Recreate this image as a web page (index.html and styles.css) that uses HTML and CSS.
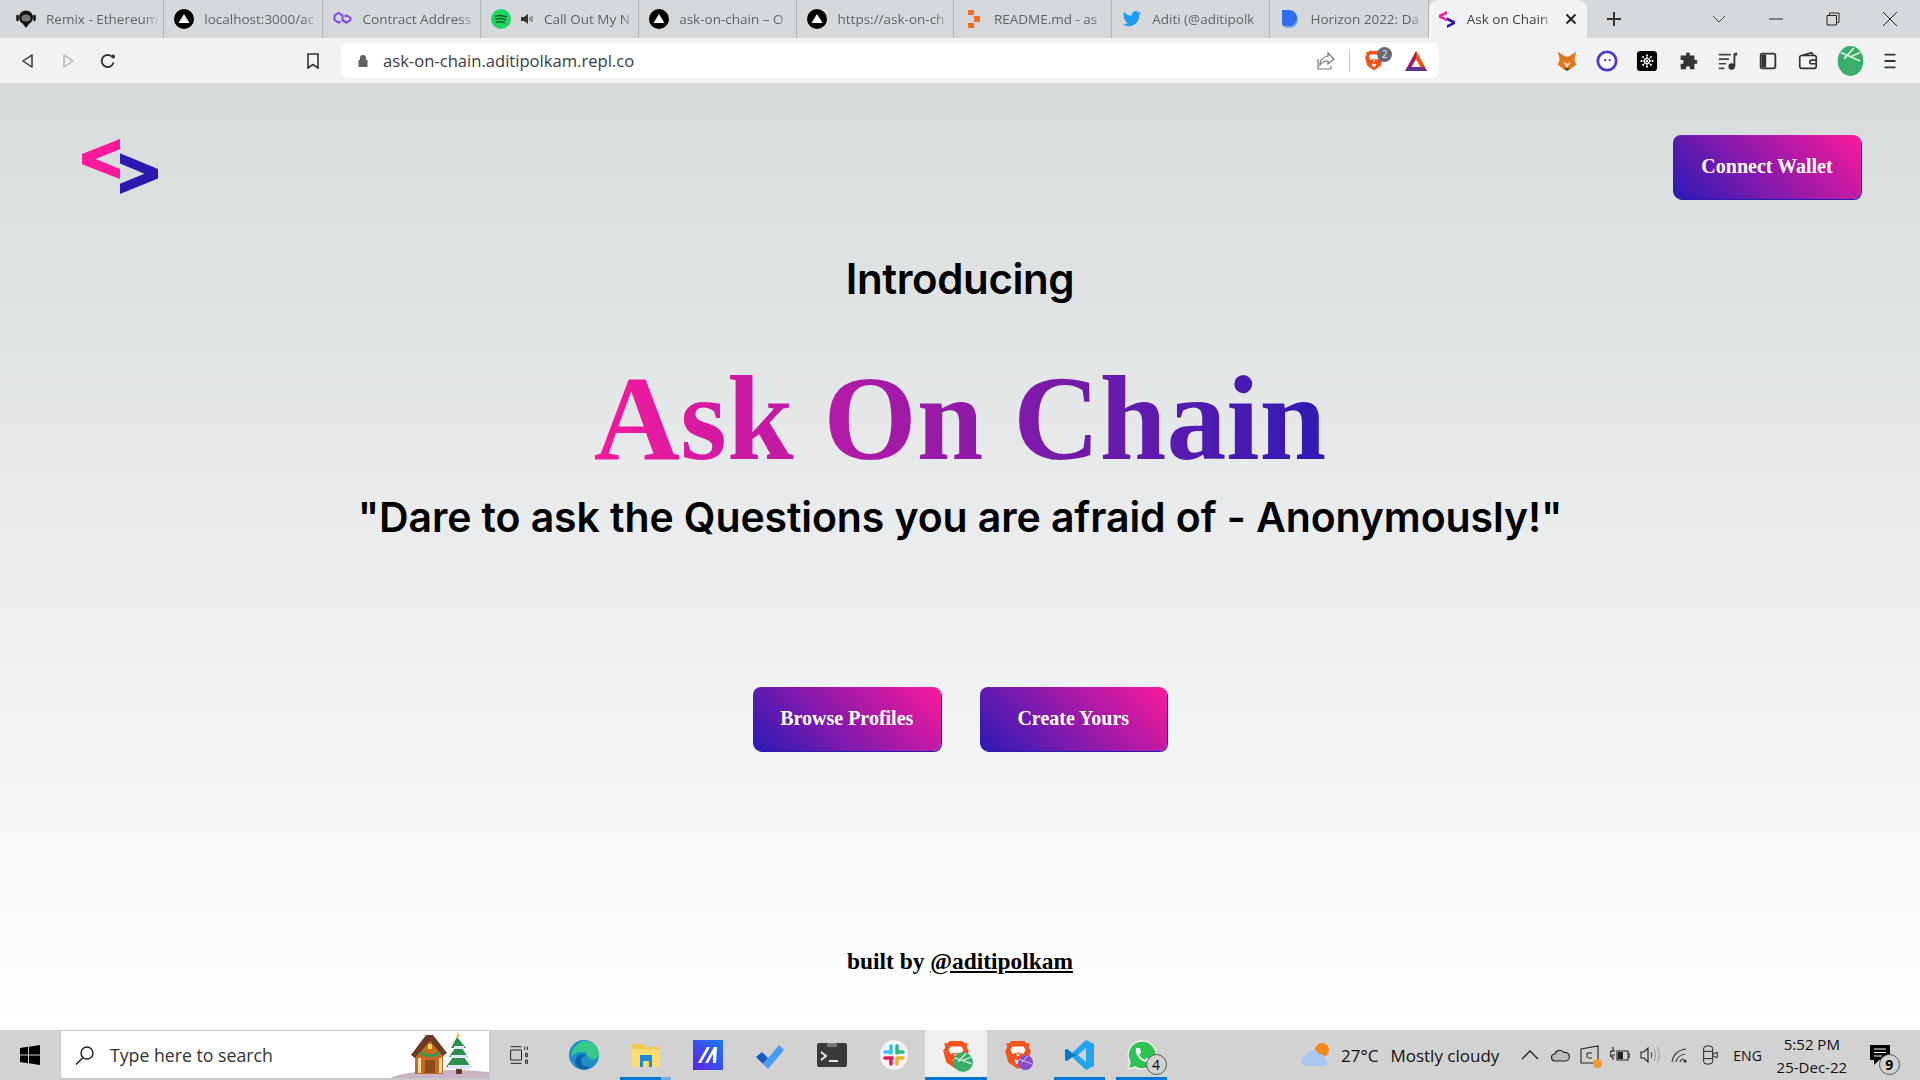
FILE: index.html
```html
<!DOCTYPE html>
<html lang="en">
<head>
<meta charset="utf-8">
<title>Ask on Chain</title>
<link rel="stylesheet" href="styles.css">
</head>
<body>
<svg class="defs" width="0" height="0" aria-hidden="true">
  <defs>
    <symbol id="vercel" viewBox="0 0 20 20"><circle cx="10" cy="10" r="10" fill="#000"/><path d="M10 5l5.500 9h-11z" fill="#fff"/></symbol>
    <symbol id="logo" viewBox="68 62 224 162"><path d="M180 62v30l-72 29 72 29v30L68 136v-30z" fill="#fb1a9c"/><path d="M180 104l112 46v28l-112 46v-30l72-30-72-30z" fill="#2a1ab0"/></symbol>
    <symbol id="brave" viewBox="0 0 24 28"><path d="M6 1h12l2 2 3 0-1 4 2 3-3 11-9 6-9-6L0 10l2-3-1-4 3 0z" fill="#f1541e"/><path d="M7 6h10l2 3-2 4-3-1-1 3h-2l-1-3-3 1-2-4z" fill="#fff"/><path d="M9 18l3 1 3-1-1 4h-4z" fill="#fff"/><path d="M10 12l2 2 2-2" fill="#f1541e"/></symbol>
    <symbol id="ball" viewBox="0 0 24 28"><ellipse cx="12" cy="14" rx="12" ry="14" fill="#3cae6c"/><path d="M3 6l18 8M15 2L6 12M12 10l9-4" stroke="#d8efe0" stroke-width="1.500" fill="none"/></symbol>
  </defs>
</svg>

<header class="tabstrip">
  <div class="tab">
    <svg class="fav" viewBox="0 0 20 20"><circle cx="10" cy="8.500" r="7" fill="#111"/><ellipse cx="10" cy="9" rx="4.500" ry="3.500" fill="#777"/><path d="M1.500 7v4M18.500 7v4" stroke="#111" stroke-width="2.500" stroke-linecap="round"/><path d="M7 15l3 4 3-4z" fill="#111"/></svg>
    <span class="tab-title">Remix - Ethereum</span>
  </div>
  <div class="tab">
    <svg class="fav"><use href="#vercel"/></svg>
    <span class="tab-title">localhost:3000/ac</span>
  </div>
  <div class="tab">
    <svg class="fav" viewBox="0 0 20 20"><path d="M1.500 6.500L5.500 4l4 2.500v4.500l4 2.500 4-2.500V9l-4-2.500-2 1.200M13.500 14l-4-2.500V7M1.500 6.500V11l4 2.500 2-1.200" fill="none" stroke="#8247e5" stroke-width="2"/></svg>
    <span class="tab-title">Contract Address</span>
  </div>
  <div class="tab">
    <svg class="fav" viewBox="0 0 20 20"><circle cx="10" cy="10" r="10" fill="#1ed760"/><path d="M4.500 7c4-1 8-.7 11 1M5 10c3.500-.8 7-.5 9.500 1M5.500 13c3-.6 5.500-.4 8 .8" fill="none" stroke="#155d2e" stroke-width="1.500" stroke-linecap="round"/></svg>
    <svg class="audio" viewBox="0 0 14 14"><path d="M1 5h3l4-3v10L4 9H1z" fill="#333"/><path d="M10 5v4M12 4v6" stroke="#555"/></svg>
    <span class="tab-title">Call Out My N</span>
  </div>
  <div class="tab">
    <svg class="fav"><use href="#vercel"/></svg>
    <span class="tab-title">ask-on-chain – O</span>
  </div>
  <div class="tab tab-tight">
    <svg class="fav"><use href="#vercel"/></svg>
    <span class="tab-title">https://ask-on-ch</span>
  </div>
  <div class="tab">
    <svg class="fav" viewBox="0 0 20 20"><path d="M4 1h6v5H4zM10 7h6v6h-6zM4 14h6v5H4z" fill="#f26d1d"/></svg>
    <span class="tab-title">README.md - as</span>
  </div>
  <div class="tab">
    <svg class="fav" viewBox="0 0 24 24"><path d="M23 5a9 9 0 0 1-2.600.7A4.500 4.500 0 0 0 22.400 3a9 9 0 0 1-2.900 1.100 4.500 4.500 0 0 0-7.700 4.100A12.800 12.800 0 0 1 2.500 3.500a4.500 4.500 0 0 0 1.400 6 4.500 4.500 0 0 1-2-.6c0 2.200 1.600 4 3.600 4.500a4.500 4.500 0 0 1-2 .1 4.500 4.500 0 0 0 4.200 3.100A9 9 0 0 1 1 18.500 12.800 12.800 0 0 0 20.700 7.100 9 9 0 0 0 23 5z" fill="#1d9bf0"/></svg>
    <span class="tab-title">Aditi (@aditipolk</span>
  </div>
  <div class="tab">
    <svg class="fav" viewBox="0 0 20 20"><path d="M3 3h7a8 8 0 0 1 8 8 8 8 0 0 1-8 8H6a3 3 0 0 1-3-3z" fill="#7ea6f7"/><path d="M2 1h7a8 8 0 0 1 8 8 8 8 0 0 1-8 8H5a3 3 0 0 1-3-3z" fill="#2f6bea"/></svg>
    <span class="tab-title">Horizon 2022: Da</span>
  </div>
  <div class="tab tab-active">
    <svg class="fav-logo" viewBox="0 0 40 46" preserveAspectRatio="none"><path d="M20 0v8L8 14l12 7v7L0 18v-8z" fill="#fb1a9c"/><path d="M20 17l20 11v7L20 46v-8l12-6-12-7z" fill="#2a1ab0"/></svg>
    <span class="tab-title">Ask on Chain</span>
    <svg class="tab-close" viewBox="0 0 12 12"><path d="M1.500 1.500l9 9M10.500 1.500l-9 9" stroke="#222" stroke-width="1.800"/></svg>
  </div>
  <svg class="new-tab" viewBox="0 0 16 16"><path d="M8 1v14M1 8h14" stroke="#333" stroke-width="2"/></svg>
  <div class="window-ctrls">
    <svg class="ctrl" viewBox="0 0 14 14"><path d="M1 4l6 6 6-6" fill="none" stroke="#444"/></svg>
    <svg class="ctrl" viewBox="0 0 14 14"><path d="M0 7h14" stroke="#222"/></svg>
    <svg class="ctrl" viewBox="0 0 14 14"><path d="M1 3.500h9.500V13H1zM3.500 3.500V1H13v9.500h-2.500" fill="none" stroke="#222"/></svg>
    <svg class="ctrl" viewBox="0 0 14 14"><path d="M0 0l14 14M14 0L0 14" stroke="#222"/></svg>
  </div>
</header>

<nav class="toolbar">
  <svg class="tool tool-back" viewBox="0 0 16 16"><path d="M12 2v12L3 8z" fill="none" stroke="#333" stroke-width="1.500" stroke-linejoin="round"/></svg>
  <svg class="tool tool-fwd" viewBox="0 0 16 16"><path d="M4 2v12l9-6z" fill="none" stroke="#b5b5b5" stroke-width="1.500" stroke-linejoin="round"/></svg>
  <svg class="tool tool-reload" viewBox="0 0 16 16"><path d="M13.500 9.500A6 6 0 1 1 11 3" fill="none" stroke="#333" stroke-width="1.800"/><circle cx="13" cy="3.500" r="2" fill="#333"/></svg>
  <svg class="tool tool-mark" viewBox="0 0 16 16"><path d="M3 1h10v14l-5-3.500L3 15z" fill="none" stroke="#333" stroke-width="1.600"/></svg>
  <div class="omnibox">
    <svg class="lock" viewBox="0 0 12 14"><path d="M3 6V4a3 3 0 0 1 6 0v2h1.500v7h-9V6z" fill="#5f6368"/></svg>
    <span class="url">ask-on-chain.aditipolkam.repl.co</span>
    <svg class="share" viewBox="0 0 20 20"><path d="M12 2l6 6-6 5v-3c-4 0-6 1-8 4 0-5 3-8 8-9zM2 8v10h13v-3" fill="none" stroke="#777" stroke-width="1.200"/></svg>
    <i class="omni-sep"></i>
    <span class="shield">
      <svg class="shield-icon"><use href="#brave"/></svg>
      <b class="shield-badge">2</b>
    </span>
    <svg class="bat" viewBox="0 0 24 22"><path d="M12 1l11 20H1z" fill="#9e1f63"/><path d="M12 1l11 20h-6L12 11z" fill="#ff5000"/><path d="M1 21h22l-3-4H4z" fill="#662d91"/><path d="M12 9l4.500 8h-9z" fill="#f2f2f2"/></svg>
  </div>
  <div class="extensions">
    <svg class="ext" viewBox="0 0 24 24"><path d="M2 2l8 5h4l8-5-2 8 2 6-5 4-3 2h-4l-3-2-5-4 2-6z" fill="#e2761b"/><path d="M8 13l4 7 4-7-4 2z" fill="#f6e3cf"/><path d="M9 20h6l-3 3z" fill="#333"/></svg>
    <svg class="ext" viewBox="0 0 24 24"><circle cx="12" cy="12" r="10" fill="#fff" stroke="#4a3bd0" stroke-width="3"/><circle cx="10" cy="11" r="1.300" fill="#4a3bd0"/><circle cx="15" cy="11" r="1.300" fill="#4a3bd0"/></svg>
    <svg class="ext" viewBox="0 0 24 24"><rect x="1" y="1" width="22" height="22" rx="4" fill="#000"/><path d="M12 5v14M5 12h14M7 7l10 10M17 7L7 17" stroke="#fff" stroke-width="2" stroke-dasharray="2 1"/></svg>
    <svg class="ext" viewBox="0 0 24 24"><path d="M10 3h4v3h5v5h3v4h-3v6h-5v-3h-4v3H4v-6h3v-4H4V6h6z" fill="#333"/></svg>
    <svg class="ext" viewBox="0 0 24 24"><path d="M2 5h13M2 10h11M2 15h8M2 20h6" stroke="#444" stroke-width="1.800"/><path d="M19 4v14" stroke="#333" stroke-width="2"/><path d="M19 3h3v3h-3z" fill="#333"/><circle cx="16" cy="18" r="3.500" fill="#333"/></svg>
    <svg class="ext" viewBox="0 0 24 24"><rect x="4" y="4" width="16" height="16" rx="2" fill="none" stroke="#333" stroke-width="2"/><path d="M5 5h5v14H5z" fill="#333"/></svg>
    <svg class="ext" viewBox="0 0 24 24"><path d="M5 6l11-3 2 3M3 8a2 2 0 0 1 2-2h14a2 2 0 0 1 2 2v10a2 2 0 0 1-2 2H5a2 2 0 0 1-2-2zM21 11h-5a2 2 0 0 0 0 4h5" fill="none" stroke="#333" stroke-width="1.800"/></svg>
    <svg class="avatar"><use href="#ball"/></svg>
    <svg class="ext" viewBox="0 0 24 24"><path d="M6 5h12M6 12h12M6 19h12" stroke="#333" stroke-width="2"/></svg>
  </div>
</nav>

<main class="page">
  <div class="site-nav">
    <svg class="site-logo"><use href="#logo"/></svg>
    <a class="btn btn-wallet">Connect Wallet</a>
  </div>
  <section class="hero">
    <h2 class="intro">Introducing</h2>
    <h1 class="title">Ask On Chain</h1>
    <p class="tagline">"Dare to ask the Questions you are afraid of - Anonymously!"</p>
    <div class="actions">
      <a class="btn btn-cta">Browse Profiles</a>
      <a class="btn btn-cta">Create Yours</a>
    </div>
    <footer class="credit">built by <u>@aditipolkam</u></footer>
  </section>
</main>

<footer class="taskbar">
  <div class="start">
    <svg class="win" viewBox="0 0 20 20"><path d="M0 3l8-1.200V9.500H0zM9 1.700L20 0v9.500H9zM0 10.500h8v7.700L0 17zM9 10.500h11V20L9 18.300z" fill="#000"/></svg>
  </div>
  <div class="search">
    <svg class="loupe" viewBox="0 0 20 20"><circle cx="12" cy="8" r="6" fill="none" stroke="#222" stroke-width="1.400"/><path d="M8 12.500L1 19.500" stroke="#222" stroke-width="1.500"/></svg>
    <span class="search-text">Type here to search</span>
    <span class="xmas">
      <svg viewBox="0 0 97 50" width="97" height="50"><path d="M0 49c20-7 60-9 97-5v6H0z" fill="#c9b3c4"/>
        <g transform="translate(0 2)"><path d="M23 22L37 10l14 12v22H23z" fill="#c46a21"/><path d="M19 25L34 5h7l14 18-4 3-13-15-15 17z" fill="#6b3a26"/><path d="M28 22c6 5 14 5 20 0" fill="none" stroke="#2a9a55" stroke-width="2.500"/><path d="M33 30h10v13H33z" fill="#8f4a18"/><path d="M26 28h3v15h-3zM47 28h3v15h-3z" fill="#f0d8b0"/><path d="M36 14h4v5h-4z" fill="#f4d35e"/></g>
        <g transform="translate(-6 4)"><path d="M72 0l2 5h-4z" fill="#f4c430"/><path d="M71 5l9 11h-4l6 9h-4l7 10H60l7-10h-4l6-9h-4z" fill="#2b8f4e"/><path d="M62 33h22v4H62zM65 23h16v3H65zM68 14h10v3H68z" fill="#dfe6f5"/><path d="M70 37h6v5h-6z" fill="#6b3a26"/></g>
      </svg>
    </span>
  </div>
  <div class="task task-view">
    <svg class="ticon ticon-sm" viewBox="0 0 24 24"><path d="M2 2h13M2 22h13M2 6h13v12H2zM19 2v4M22 2v4M20 10h2v4h-2zM20 18h2v4h-2z" fill="none" stroke="#222" stroke-width="1.200"/></svg>
  </div>
  <div class="task">
    <svg class="ticon" viewBox="0 0 30 30"><circle cx="15" cy="15" r="15" fill="#1e8fc8"/><path d="M2 18C2 8 10 1 16 1c7 0 13 5 14 13 0 4-4 6-8 5-5-1-2-6-7-7-7-1-13 3-13 6z" fill="#37c98b"/><path d="M12 29c-5-2-7-7-5-11 2-4 8-5 10-2-3 0-6 2-5 6 1 4 5 5 9 5-2 2-6 3-9 2z" fill="#0f5fa8"/></svg>
  </div>
  <div class="task task-running task-files">
    <svg class="ticon" viewBox="0 0 30 30"><path d="M1 4h11l3 3h14v20H1z" fill="#f2c94c"/><path d="M1 9h28v18H1z" fill="#fbdc72"/><path d="M9 15h12v12h-3v-6h-6v6H9z" fill="#1e88d6"/></svg>
  </div>
  <div class="task">
    <svg class="ticon" viewBox="0 0 30 30"><defs><linearGradient id="m" x1="0" y1="1" x2="1" y2="0"><stop offset="0" stop-color="#5a22e0"/><stop offset="1" stop-color="#1a7bf2"/></linearGradient></defs><path d="M0 0h30v30H0z" fill="url(#m)"/><path d="M5 23L14 7h3L8 23zM12 23l9-16h3l-1 16h-3v-9l-5 9z" fill="#fff"/></svg>
  </div>
  <div class="task">
    <svg class="ticon" viewBox="0 0 30 30"><path d="M1 17l6-5 6 6-5 6z" fill="#185abd"/><path d="M8 24L24 5l5 5-16 19z" fill="#4a9cf0"/></svg>
  </div>
  <div class="task">
    <svg class="ticon" viewBox="0 0 30 30"><rect y="3" width="30" height="24" rx="2" fill="#3a3a3a"/><path d="M10 3h10v4H10z" fill="#777"/><path d="M4 12l5 4-5 4" fill="none" stroke="#e8e8e8" stroke-width="2"/><path d="M12 21h9" stroke="#e8e8e8" stroke-width="2"/></svg>
  </div>
  <div class="task">
    <svg class="ticon" viewBox="0 0 30 30"><ellipse cx="15" cy="15" rx="14" ry="15" fill="#f4f4f4"/><path d="M12 6v7M6 12h6" stroke="#36c5f0" stroke-width="3.500" stroke-linecap="round"/><path d="M18 6v7M24 12h-6" stroke="#2eb67d" stroke-width="3.500" stroke-linecap="round"/><path d="M6 18h7M12 18v6" stroke="#e01e5a" stroke-width="3.500" stroke-linecap="round"/><path d="M18 18v6M18 18h6" stroke="#ecb22e" stroke-width="3.500" stroke-linecap="round"/></svg>
  </div>
  <div class="task task-current">
    <span class="stack">
      <svg class="ticon"><use href="#brave"/></svg>
      <svg class="overlay" viewBox="0 0 24 24"><circle cx="12" cy="12" r="12" fill="#3cae6c"/><path d="M2 7l20 7M16 1L6 12M12 10l10-4" stroke="#d8efe0" stroke-width="1.500" fill="none"/></svg>
    </span>
  </div>
  <div class="task">
    <span class="stack">
      <svg class="ticon"><use href="#brave"/></svg>
      <svg class="overlay overlay-purple" viewBox="0 0 24 24"><circle cx="12" cy="12" r="12" fill="#8a4bc8"/><path d="M2 7l20 7M16 1L6 12" stroke="#e6c8f0" stroke-width="1.500"/></svg>
    </span>
  </div>
  <div class="task task-running">
    <svg class="ticon" viewBox="0 0 30 30"><path d="M21 0l8 4v22l-8 4L7 17l-5 4-2-1V10l2-1 5 4zM21 8l-8 7 8 7z" fill="#23a4ec"/><path d="M7 13l5 2-5 2-5 4-2-1V10l2-1z" fill="#0a78c2"/></svg>
  </div>
  <div class="task task-running">
    <span class="stack">
      <svg class="ticon" viewBox="0 0 30 30"><path d="M15 1a14 14 0 0 0-12 21L1 29l7-2A14 14 0 1 0 15 1z" fill="#2fc254" stroke="#eee" stroke-width="1.500"/><path d="M10 8l3 0 1 5-2 1c1 3 3 5 6 6l1-2 4 1v3c-6 2-16-6-14-14z" fill="#fff"/></svg>
      <b class="count">4</b>
    </span>
  </div>
  <div class="weather">
    <svg class="weather-icon" viewBox="0 0 30 30"><circle cx="21" cy="10" r="7" fill="#f08a1d"/><path d="M6 26a5 5 0 0 1-1-10 7 7 0 0 1 13-2 5 5 0 0 1 6 5 4 4 0 0 1 0 7z" fill="#a8c8ef"/></svg>
    <span>27°C</span>
    <span>Mostly cloudy</span>
  </div>
  <div class="tray">
    <svg class="tray-icon" viewBox="0 0 20 18"><path d="M2 13l8-8 8 8" fill="none" stroke="#222" stroke-width="1.300"/></svg>
    <svg class="tray-icon" viewBox="0 0 20 18"><path d="M5 15a3.500 3.500 0 0 1 0-7 5 5 0 0 1 9-1.500A4 4 0 0 1 16 15z" fill="#bbb" stroke="#222" stroke-width="1.200"/></svg>
    <span class="tray-box">
      <svg class="tray-icon" viewBox="0 0 20 20"><path d="M1 4l17-3v17H1z" fill="none" stroke="#222" stroke-width="1.100"/><path d="M12 8H7v5M8 13h4" fill="none" stroke="#222"/></svg>
      <i class="tray-dot"></i>
    </span>
    <svg class="tray-icon" viewBox="0 0 20 20"><path d="M1 6h4M1 10h4M3 2v4a1 1 0 0 0 0 6v3M7 6h11v9H7zM18 9h2v3h-2z" fill="none" stroke="#222" stroke-width="1.100"/><path d="M8 7h5v7H8z" fill="#222"/></svg>
    <svg class="tray-icon" viewBox="0 0 20 20"><path d="M1 7h3l4-4v14l-4-4H1z" fill="none" stroke="#222" stroke-width="1.100"/><path d="M11 7c1 2 1 4 0 6" fill="none" stroke="#333"/><path d="M14 4c2 4 2 8 0 12M17 2c3 5 3 11 0 16" fill="none" stroke="#999"/></svg>
    <svg class="tray-icon" viewBox="0 0 20 20"><path d="M2 17C3 10 8 5 16 4M6 17c1-5 4-7 9-8M10 17c.5-2 2-3 4-3" fill="none" stroke="#444" stroke-width="1.200"/><circle cx="15" cy="16" r="1.500" fill="#222"/></svg>
    <svg class="tray-icon" viewBox="0 0 20 22"><path d="M3 7V4q0-3 4-3h2q4 0 4 3v3M3 15v3q0 3 4 3h2q4 0 4-3v-3M3 7h10v8H3zM13 10l5-2v6l-5-2" fill="none" stroke="#222" stroke-width="1.100"/></svg>
    <span class="lang">ENG</span>
  </div>
  <div class="clock"><span>5:52 PM</span><span>25-Dec-22</span></div>
  <div class="notify">
    <svg class="notify-icon" viewBox="0 0 20 20"><path d="M0 0h20v15H9l-5 5v-5H0z" fill="#000"/><path d="M4 4h12M4 7.500h12M4 11h8" stroke="#fff"/></svg>
    <b class="count count-notify">9</b>
  </div>
</footer>
</body>
</html>
```

FILE: styles.css
```css
* { box-sizing: border-box; }
html, body { margin: 0; height: 100%; }
body {
  width: 1920px;
  height: 1080px;
  overflow: hidden;
  display: flex;
  flex-direction: column;
  font-family: "Open Sans", "Liberation Sans", sans-serif;
}
.defs { position: absolute; }
svg { display: block; flex: none; }

/* tab strip */
.tabstrip {
  height: 38px;
  flex: none;
  display: flex;
  padding-left: 6px;
  background: #d6d9dc;
}
.tab {
  width: 158.300px;
  flex: none;
  display: flex;
  align-items: center;
  gap: 10px;
  padding: 0 4px 0 10px;
  box-shadow: inset -1px 0 0 #b4b7ba;
}
.tab-tight { width: 156.400px; }
.fav { width: 20px; height: 20px; }
.audio { width: 14px; height: 14px; margin-left: -1px; }
.tab-title {
  flex: 1;
  min-width: 0;
  overflow: hidden;
  white-space: nowrap;
  font-size: 13.500px;
  color: #5f6368;
  -webkit-mask-image: linear-gradient(to right, #000 86%, transparent);
  mask-image: linear-gradient(to right, #000 86%, transparent);
}
.tab-active {
  gap: 12px;
  background: #f1f2f3;
  border-radius: 9px 9px 0 0;
  box-shadow: none;
}
.tab-active .tab-title { color: #3c4043; }
.fav-logo { width: 16px; height: 17px; }
.tab-close { width: 12px; height: 12px; margin-right: 6px; }
.new-tab { width: 16px; height: 16px; margin: 11px 0 0 19px; }
.window-ctrls {
  margin-left: 90px;
  display: flex;
  gap: 43px;
  align-items: center;
}
.ctrl { width: 14px; height: 14px; }

/* toolbar */
.toolbar {
  height: 45px;
  flex: none;
  display: flex;
  align-items: center;
  background: #f2f2f2;
  padding-left: 20px;
}
.tool { width: 16px; height: 16px; margin-right: 24px; }
.tool-reload { margin-right: 189px; }
.tool-mark { margin-right: 20px; }
.omnibox {
  width: 1098px;
  height: 35px;
  display: flex;
  align-items: center;
  padding-left: 16px;
  background: #fff;
  border-radius: 8px;
}
.lock { width: 12px; height: 14px; margin-right: 14px; }
.url { width: 933px; font-size: 16.600px; color: #3a3c40; }
.share { width: 20px; height: 20px; margin-right: 13px; }
.omni-sep { width: 1px; height: 22px; background: #c8c8c8; margin-right: 15px; }
.shield { position: relative; margin-right: 21px; }
.shield-icon { width: 18px; height: 23px; }
.shield-badge {
  position: absolute;
  top: -2px;
  left: 12px;
  width: 15px;
  height: 15px;
  border-radius: 50%;
  background: #666a73;
  color: #eee;
  font: 400 10px/15px "Open Sans", sans-serif;
  text-align: center;
}
.bat { width: 24px; height: 22px; }
.extensions {
  display: flex;
  align-items: center;
  gap: 18.200px;
  margin-left: 117px;
}
.ext { width: 22px; height: 22px; }
.avatar { width: 27px; height: 30px; margin-right: -4px; }

/* page */
.page {
  flex: 1;
  min-height: 0;
  display: flex;
  flex-direction: column;
  background: linear-gradient(to bottom, #d7dbdc, #ffffff);
}
.site-nav {
  display: flex;
  justify-content: space-between;
  align-items: center;
  padding: 52px 59px 0 82px;
}
.site-logo { width: 76px; height: 55px; }
.btn {
  display: flex;
  align-items: center;
  justify-content: center;
  height: 63.500px;
  font: 700 20px "Liberation Serif", serif;
  color: #fff;
  border-radius: 8px;
  background: linear-gradient(45deg, #2b1ab6, #fb1a9c);
  box-shadow: 1px 1px 0 #2b1ab6;
}
.btn-wallet { width: 188px; }
.btn-cta { width: 187.500px; }
.hero {
  display: flex;
  flex-direction: column;
  align-items: center;
}
.intro {
  margin: 52.500px 0 0;
  font: 600 42px/56px Inter, "Open Sans", sans-serif;
  letter-spacing: -0.4px;
  color: #000;
}
.title {
  margin: 49px 0 0;
  font: 700 119.800px/126px "Liberation Serif", serif;
  background: linear-gradient(90deg, #f51a9e, #2f1ab4);
  -webkit-background-clip: text;
  background-clip: text;
  color: transparent;
}
.tagline {
  margin: 7px 0 0;
  font: 600 41px/56px Inter, "Open Sans", sans-serif;
  letter-spacing: -0.1px;
  color: #000;
}
.actions {
  display: flex;
  gap: 39px;
  margin-top: 142px;
}
.credit {
  margin-top: 194px;
  font: 700 23.400px/32px "Liberation Serif", serif;
  color: #000;
}

/* taskbar */
.taskbar {
  height: 50px;
  flex: none;
  display: flex;
  align-items: center;
  background: #d2d2d2;
  color: #111;
}
.start { width: 60px; display: flex; justify-content: center; }
.win { width: 20px; height: 20px; }
.search {
  width: 429.500px;
  height: 50px;
  display: flex;
  align-items: center;
  background: #fff;
  border: 1px solid #c8c8c8;
  border-bottom-width: 2px;
  padding-left: 14px;
  position: relative;
}
.loupe { width: 20px; height: 20px; margin-right: 15px; }
.search-text { font-size: 17.700px; color: #333; }
.xmas { position: absolute; right: 0; bottom: 0; }
.task {
  width: 62px;
  height: 50px;
  flex: none;
  display: flex;
  align-items: center;
  justify-content: center;
  position: relative;
}
.task-view { width: 63px; padding-right: 4px; }
.ticon { width: 30px; height: 30px; }
.ticon-sm { width: 20px; height: 20px; }
.task-running::after {
  content: "";
  position: absolute;
  left: 5.500px;
  right: 5.500px;
  bottom: 0;
  height: 3px;
  background: #0078d4;
}
.task-files::after {
  background: linear-gradient(to right, #0078d4 80%, #6fb0e4 80%);
}
.task-current { background: #efefef; }
.task-current::after {
  content: "";
  position: absolute;
  left: 0;
  right: 0;
  bottom: 0;
  height: 3px;
  background: #0078d4;
}
.stack { position: relative; display: block; }
.overlay { position: absolute; width: 20px; height: 20px; right: -2px; bottom: -2px; }
.overlay-purple { width: 15px; height: 15px; right: 0; bottom: 0; }
.count {
  position: absolute;
  right: -10px;
  bottom: -5px;
  width: 21px;
  height: 21px;
  border-radius: 50%;
  border: 1px solid #555;
  background: #d2d2d2;
  color: #000;
  font: 400 14px/19px "Open Sans", sans-serif;
  text-align: center;
}
.weather {
  display: flex;
  align-items: center;
  gap: 12px;
  margin-left: 128.500px;
  font-size: 17px;
  color: #111;
}
.weather-icon { width: 30px; height: 30px; margin-right: -2px; }
.tray {
  display: flex;
  align-items: center;
  gap: 10px;
  margin-left: 21px;
}
.tray-icon { width: 20px; height: 20px; }
.tray-box { position: relative; }
.tray-dot {
  position: absolute;
  right: -2px;
  bottom: -3px;
  width: 9px;
  height: 9px;
  border-radius: 50%;
  background: #f59a23;
}
.lang { font-size: 14px; margin-left: 3px; }
.clock {
  width: 90px;
  margin-left: 5px;
  display: flex;
  flex-direction: column;
  align-items: center;
  gap: 3px;
  font-size: 15px;
  line-height: 20px;
}
.notify { position: relative; margin-left: 13px; }
.notify-icon { width: 20px; height: 20px; }
.count-notify { right: -10px; bottom: -10px; font-weight: 700; }
```
